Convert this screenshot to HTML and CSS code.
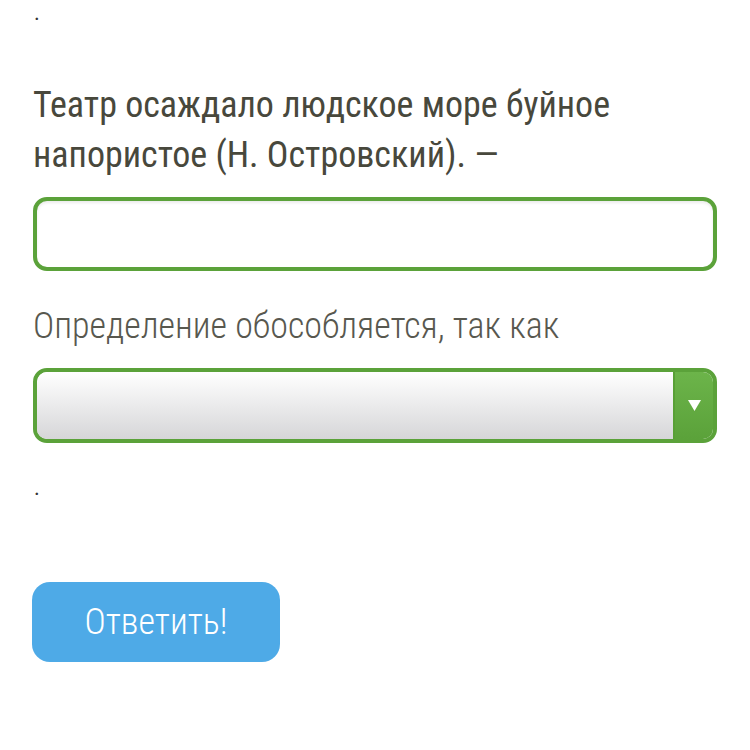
FILE: index.html
```html
<!DOCTYPE html>
<html>
<head>
    <title>Задание</title>
    <link rel="stylesheet" href="styles.css">
</head>
<body>
    <div class="task">
        <p class="dot">.</p>

        <p class="question">Театр осаждало людское море буйное напористое (Н. Островский). —</p>
        <input type="text" class="answer-input">

        <p class="label">Определение обособляется, так как</p>
        <div class="select-box">
            <div class="select-field"></div>
            <div class="select-arrow">
                <svg width="13" height="11" viewBox="0 0 13 11"><polygon points="0,0 13,0 6.5,11" fill="#fff"/></svg>
            </div>
        </div>

        <p class="dot dot-bottom">.</p>

        <button class="submit-btn">Ответить!</button>
    </div>
</body>
</html>
```
FILE: styles.css
```css
body {
    margin: 0;
    padding: 0 33px;
    background: #fff;
    font-family: "Roboto Condensed", Roboto, sans-serif;
}
.task {
    display: flex;
    flex-direction: column;
    align-items: flex-start;
}
.dot {
    margin: 3px 0 0 1px;
    height: 20px;
    font-size: 22px;
    line-height: 20px;
    color: #333;
}
.question {
    margin: 57px 0 0;
    font-size: 36px;
    line-height: 50px;
    color: #48483c;
}
.answer-input {
    box-sizing: border-box;
    width: 684px;
    height: 74px;
    margin-top: 17px;
    border: 4px solid #5ba23a;
    border-radius: 14px;
    background: #fff;
    box-shadow: inset 0 2px 3px rgba(0, 0, 0, 0.08);
    outline: none;
}
.label {
    margin: 30px 0 0;
    font-size: 36px;
    font-weight: 300;
    line-height: 50px;
    color: #58584f;
}
.select-box {
    box-sizing: border-box;
    display: flex;
    width: 684px;
    height: 75px;
    margin-top: 17px;
    border: 4px solid #5ba23a;
    border-radius: 14px;
    overflow: hidden;
}
.select-field {
    flex: 1;
    background: linear-gradient(#ffffff, #d6d6d8);
}
.select-arrow {
    width: 38px;
    display: flex;
    align-items: center;
    justify-content: center;
    background: linear-gradient(#6cb44a, #5ba23a);
    border-left: 2px solid #58a036;
}
.dot-bottom {
    margin-top: 35px;
}
.submit-btn {
    margin-top: 84px;
    margin-left: -1px;
    width: 248px;
    height: 80px;
    border: none;
    border-radius: 18px;
    background: #4eaae7;
    color: #fff;
    font-family: "Roboto Condensed", Roboto, sans-serif;
    font-size: 36px;
    font-weight: 300;
    cursor: pointer;
}
```
